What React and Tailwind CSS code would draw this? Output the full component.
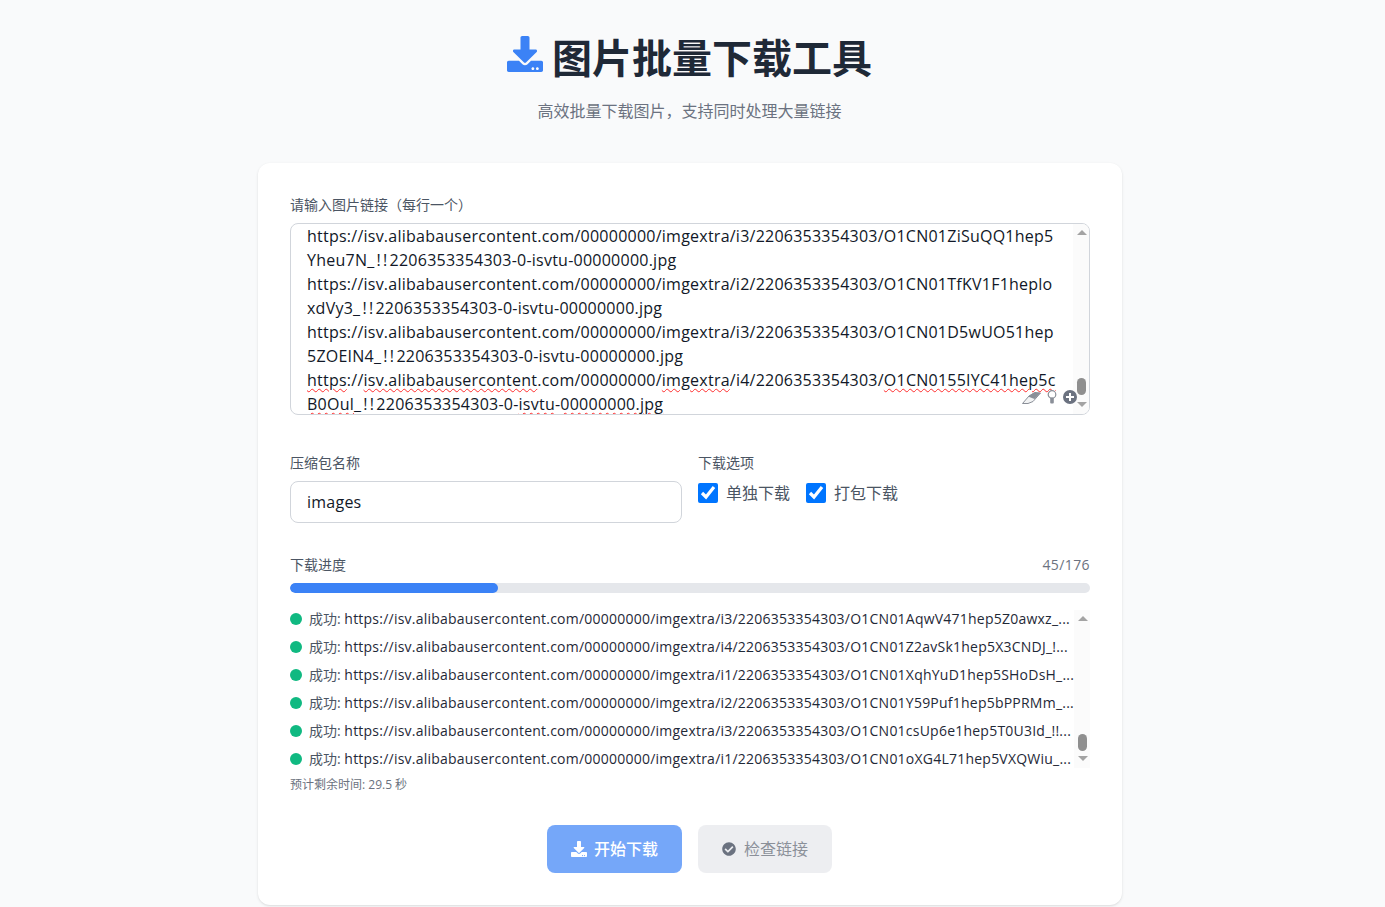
import { FaDownload, FaCheckCircle } from "react-icons/fa";

const urlLines = [
  "https://isv.alibabausercontent.com/00000000/imgextra/i3/2206353354303/O1CN01ZiSuQQ1hep5",
  "Yheu7N_!!2206353354303-0-isvtu-00000000.jpg",
  "https://isv.alibabausercontent.com/00000000/imgextra/i2/2206353354303/O1CN01TfKV1F1heplo",
  "xdVy3_!!2206353354303-0-isvtu-00000000.jpg",
  "https://isv.alibabausercontent.com/00000000/imgextra/i3/2206353354303/O1CN01D5wUO51hep",
  "5ZOEIN4_!!2206353354303-0-isvtu-00000000.jpg",
];

const logs = [
  "https://isv.alibabausercontent.com/00000000/imgextra/i3/2206353354303/O1CN01AqwV471hep5Z0awxz_...",
  "https://isv.alibabausercontent.com/00000000/imgextra/i4/2206353354303/O1CN01Z2avSk1hep5X3CNDJ_!...",
  "https://isv.alibabausercontent.com/00000000/imgextra/i1/2206353354303/O1CN01XqhYuD1hep5SHoDsH_...",
  "https://isv.alibabausercontent.com/00000000/imgextra/i2/2206353354303/O1CN01Y59Puf1hep5bPPRMm_...",
  "https://isv.alibabausercontent.com/00000000/imgextra/i3/2206353354303/O1CN01csUp6e1hep5T0U3Id_!!...",
  "https://isv.alibabausercontent.com/00000000/imgextra/i1/2206353354303/O1CN01oXG4L71hep5VXQWiu_...",
];

const Squiggle = ({ children }) => (
  <span className="underline decoration-wavy decoration-[#ff2d2d] decoration-1 underline-offset-2">
    {children}
  </span>
);

// the "_!!" run sets wider in the reference than in Open Sans
const Bangs = () => <span className="tracking-[2.3px]">_!!</span>;

const UrlLine = ({ line }) => {
  const parts = line.split("_!!");
  if (parts.length < 2) return <div>{line}</div>;
  return (
    <div>
      {parts[0]}
      <Bangs />
      {parts[1]}
    </div>
  );
};

const Scrollbar = ({ track, thumb }) => (
  <div className={track}>
    <div className="absolute top-[6px] left-[4px] w-0 h-0 border-x-[5px] border-x-transparent border-b-[5px] border-b-[#a3a3a3]" />
    <div className={thumb} />
    <div className="absolute bottom-[7px] left-[4px] w-0 h-0 border-x-[5px] border-x-transparent border-t-[5px] border-t-[#a3a3a3]" />
  </div>
);

const App = () => {
  return (
    <div
      className="h-[907px] overflow-hidden bg-[#f9fafb] pr-[5px]"
      style={{ fontFamily: '"Open Sans", "Noto Sans CJK SC", sans-serif' }}
    >
      <div className="w-[864px] mx-auto pt-[30px]">
        {/* Header */}
        <div className="text-center mb-[40px]">
          <h1 className="flex items-center justify-center gap-[9px] text-[40px] leading-[56px] font-bold text-[#1f2937] mb-[13px] mr-[1px]">
            <FaDownload className="text-[#3b82f6] w-[36px] h-[36px] mb-[8px]" />
            <span>图片批量下载工具</span>
          </h1>
          <p className="text-base leading-[24px] text-[#6b7280] pr-[1px]">
            高效批量下载图片，支持同时处理大量链接
          </p>
        </div>

        {/* Card */}
        <div className="bg-white rounded-xl shadow-sm px-[32px] pt-[32px] h-[742px]">
          <label className="block text-sm leading-[20px] text-[#4b5563] mb-[8px]">
            请输入图片链接（每行一个）
          </label>
          <div className="relative h-[192px] border border-[#d1d5db] rounded-lg overflow-hidden text-base leading-[24px] tracking-[0.24px] text-[#111827]">
            <div className="pl-[16px] whitespace-nowrap">
              {urlLines.map((line) => (
                <UrlLine key={line} line={line} />
              ))}
              <div>
                <Squiggle>https</Squiggle>://
                <Squiggle>isv.alibabausercontent</Squiggle>.com/00000000/
                <Squiggle>imgextra</Squiggle>/i4/2206353354303/
                <Squiggle>O1CN0155IYC41hep5c</Squiggle>
              </div>
              <div>
                <Squiggle>B0Oul</Squiggle>
                <Bangs />
                2206353354303-0-
                <Squiggle>isvtu</Squiggle>-<Squiggle>00000000.jpg</Squiggle>
              </div>
            </div>
            <Scrollbar
              track="absolute top-0 right-0 bottom-0 w-4 bg-[#fbfbfb]"
              thumb="absolute top-[154px] left-[4px] w-[9px] h-[17px] rounded-full bg-[#8f8f8f]"
            />
            <div className="absolute right-[12px] bottom-[10px] flex items-end gap-[6px]">
              <svg width="19" height="12" viewBox="0 0 19 12">
                <path d="M0.5 11.5 L7 4 L13 0.5 L18.5 1 L11 9.5 L6 11.5 Z" fill="#f2f3f4" stroke="#8a8f98" strokeWidth="1" />
                <path d="M6 4.5 L12 0.5 L18.5 1 L12.5 7 Z" fill="#8a8f98" />
              </svg>
              <svg width="10" height="14" viewBox="0 0 10 14">
                <circle cx="5" cy="4.5" r="3.8" fill="#fff" stroke="#8a8f98" strokeWidth="1.2" />
                <rect x="3.2" y="7.5" width="3.6" height="6" rx="1" fill="#8a8f98" />
              </svg>
              <svg width="14" height="14" viewBox="0 0 14 14">
                <circle cx="7" cy="7" r="7" fill="#6b7280" />
                <path d="M7 3 V11 M3 7 H11" stroke="#fff" strokeWidth="2" />
              </svg>
            </div>
          </div>

          <div className="grid grid-cols-2 gap-[16px] mt-[38px]">
            <div>
              <label className="block text-sm leading-[20px] text-[#4b5563] mb-[8px]">
                压缩包名称
              </label>
              <input
                defaultValue="images"
                className="w-full h-[42px] px-[16px] border border-[#d1d5db] rounded-lg text-base tracking-[0.24px] text-[#111827] outline-none"
              />
            </div>
            <div>
              <label className="block text-sm leading-[20px] text-[#4b5563] mb-[8px]">
                下载选项
              </label>
              <div className="flex items-center gap-[16px]">
                <label className="flex items-center gap-[8px] text-base leading-[24px] text-[#4b5563]">
                  <input type="checkbox" defaultChecked className="w-5 h-5 m-0" />
                  单独下载
                </label>
                <label className="flex items-center gap-[8px] text-base leading-[24px] text-[#4b5563]">
                  <input type="checkbox" defaultChecked className="w-5 h-5 m-0" />
                  打包下载
                </label>
              </div>
            </div>
          </div>

          {/* Progress */}
          <div className="flex items-center justify-between mt-[32px] mb-[8px] text-sm leading-[20px]">
            <span className="text-[#4b5563]">下载进度</span>
            <span className="text-[#6b7280] tracking-[0.4px]">45/176</span>
          </div>
          <div className="h-[10px] rounded-full bg-[#e5e7eb] overflow-hidden">
            <div className="h-full w-[26%] rounded-full bg-[#3b82f6]" />
          </div>

          {/* Log */}
          <div className="relative mt-[12px] h-[168px] overflow-hidden">
            {logs.map((url) => (
              <div key={url} className="flex items-center h-[28px] text-sm whitespace-nowrap text-[#4b5563]">
                <span className="w-[12px] h-[12px] rounded-full bg-[#10b981] mr-[7px] shrink-0" />
                <span>
                  成功: <span className="tracking-[0.227px] text-[#1f2937]">{url}</span>
                </span>
              </div>
            ))}
            <Scrollbar
              track="absolute top-[5px] right-0 bottom-[5px] w-4 bg-[#fbfbfb]"
              thumb="absolute top-[124px] left-[4px] w-[9px] h-[17px] rounded-full bg-[#8f8f8f]"
            />
          </div>
          <p className="text-xs leading-[16px] text-[#6b7280] mt-[4px]">预计剩余时间: 29.5 秒</p>

          {/* Actions */}
          <div className="flex justify-center gap-[16px] mt-[32px] mr-[1px]">
            <button className="flex items-center justify-center gap-[7px] w-[135px] h-[48px] rounded-lg bg-[#3b82f6]/70 text-white text-base font-medium">
              <FaDownload className="w-[16px] h-[16px]" />
              开始下载
            </button>
            <button className="flex items-center justify-center gap-[8px] w-[134px] h-[48px] rounded-lg bg-[#e5e7eb]/70 text-[#8b9099] text-base">
              <FaCheckCircle className="w-[14px] h-[14px] text-[#6b7280]" />
              检查链接
            </button>
          </div>
        </div>
      </div>
    </div>
  );
};

export default App;
